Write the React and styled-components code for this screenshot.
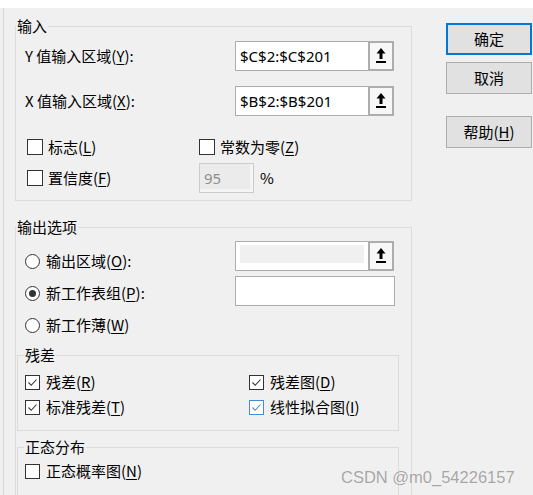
import React from 'react'
import styled, { createGlobalStyle } from 'styled-components'

const GlobalStyle = createGlobalStyle`
  body {
    margin: 0;
    background: #f0f0f0;
    font-family: "Noto Sans CJK SC", "Noto Sans", sans-serif;
    font-size: 15px;
    color: #000;
  }
  u {
    text-underline-offset: 2px;
    text-decoration-thickness: 1px;
  }
`

const Window = styled.div`
  position: relative;
  width: 533px;
  height: 495px;
  overflow: hidden;
  display: flex;
  flex-direction: column;
  background: #f0f0f0;
`

const TopStrip = styled.div`
  height: 8px;
  flex: none;
  background: #fff;
`

const Body = styled.div`
  flex: 1;
  display: flex;
  margin-left: 3px;
  padding-left: 11px;
  border-left: 1px solid #d5d5d5;
`

const Main = styled.div`
  width: 397px;
  flex: none;
  display: flex;
  flex-direction: column;
`

const Group = styled.fieldset`
  margin: ${p => p.$mt || 0}px 0 0;
  padding: 0;
  min-width: 0;
  border: 1px solid #dcdcdc;
`

const SubGroup = styled(Group)`
  margin: ${p => p.$mt || 0}px 12px 0 1px;
`

const Legend = styled.legend`
  margin-left: ${p => p.$indent || 0}px;
  padding: 0 1px;
  font-size: 15px;
  line-height: 16px;
`

const Fields = styled.div`
  padding: 7px 17px 7px 9px;
`

const FieldRow = styled.div`
  display: flex;
  align-items: center;
  justify-content: space-between;
  height: 30px;
  line-height: 18px;

  & + & {
    margin-top: 15px;
  }
`

const RangeInput = styled.div`
  display: flex;
  width: ${p => p.$width || 159}px;
  height: 30px;
`

const TextBox = styled.div`
  flex: 1;
  display: flex;
  align-items: center;
  padding: ${p => (p.$disabled ? '3px 4px 7px 4px' : '0 4px')};
  border: 1px solid #acacac;
  border-right: ${p => (p.$attached ? 'none' : '1px solid #acacac')};
  background: #fff;
  font-family: "Noto Sans", sans-serif;
  font-size: 15px;
  line-height: 18px;
`

const DisabledFill = styled.div`
  flex: 1;
  align-self: stretch;
  background: #f0f0f0;
`

const PickButton = styled.div`
  width: 26px;
  flex: none;
  display: flex;
  align-items: center;
  justify-content: center;
  box-sizing: border-box;
  border: 2px solid #adadad;
  background: #f7f7f7;
`

const Options = styled.div`
  display: grid;
  grid-template-columns: ${p => p.$col}px 1fr;
  row-gap: ${p => p.$gap}px;
  margin-top: ${p => p.$mt || 0}px;
  padding: ${p => p.$pad};
  line-height: 18px;
`

const CheckItem = styled.label`
  display: flex;
  align-items: center;
  gap: ${p => p.$gap || 5}px;
  height: ${p => p.$h || 20}px;
`

const Box = styled.span`
  width: ${p => p.$size}px;
  height: ${p => p.$size}px;
  box-sizing: border-box;
  flex: none;
  display: flex;
  align-items: center;
  justify-content: center;
  border: 1px solid ${p => (p.$focus ? '#3f8fd2' : '#333')};
  background: #fff;
`

const PercentBox = styled.div`
  width: 55px;
  height: 30px;
  box-sizing: border-box;
  display: flex;
  align-items: center;
  padding-left: 4px;
  border: 1px solid #cccccc;
  background: #ebebeb;
  box-shadow: inset -3px -3px 0 #f4f4f4;
  color: #8d8d8d;
  font-family: "Noto Sans", sans-serif;
  font-size: 15px;
`

const OutputArea = styled.div`
  display: flex;
  justify-content: space-between;
  padding: 6px 16px 0 9px;
`

const RadioColumn = styled.div`
  display: flex;
  flex-direction: column;
  margin-top: 4px;
`

const RadioItem = styled.label`
  display: flex;
  align-items: center;
  gap: 6px;
  height: 32px;
  line-height: 18px;
`

const Circle = styled.span`
  position: relative;
  width: 15px;
  height: 15px;
  box-sizing: border-box;
  flex: none;
  border: 1px solid #333;
  border-radius: 50%;
  background: #fff;

  &::after {
    content: '';
    display: ${p => (p.$checked ? 'block' : 'none')};
    position: absolute;
    left: 3px;
    top: 3px;
    width: 7px;
    height: 7px;
    border-radius: 50%;
    background: #333;
  }
`

const InputColumn = styled.div`
  display: flex;
  flex-direction: column;
  gap: 5px;
`

const Buttons = styled.div`
  width: 86px;
  flex: none;
  display: flex;
  flex-direction: column;
  margin-left: 34px;
  padding-top: 15px;
`

const Button = styled.button`
  height: 32px;
  margin-top: ${p => p.$mt || 0}px;
  padding: 0;
  box-sizing: border-box;
  border: ${p => (p.$primary ? '2px solid #0078d7' : '1px solid #adadad')};
  background: #e1e1e1;
  font-family: inherit;
  font-size: 15px;
  line-height: 18px;
  color: #000;
`

const Watermark = styled.div`
  position: absolute;
  left: 341px;
  top: 467px;
  font-family: "Liberation Sans", Arial, sans-serif;
  font-size: 16.5px;
  line-height: 20px;
  color: rgba(150, 150, 150, 0.85);
  text-shadow: 0 0 1px rgba(255, 255, 255, 0.6);
  white-space: nowrap;
`

const UpArrow = () => (
  <svg width="10" height="16" viewBox="0 0 10 16">
    <polygon points="5,0 9.5,5.5 6.5,5.5 6.5,11 3.5,11 3.5,5.5 0.5,5.5" fill="#000" />
    <rect x="0" y="13" width="10" height="2" fill="#000" />
  </svg>
)

const Check = ({ color = '#333' }) => (
  <svg width="13" height="13" viewBox="0 0 13 13">
    <polyline points="2.5,6.5 5.2,9.3 10.5,3.5" fill="none" stroke={color} strokeWidth="1.1" />
  </svg>
)

const CheckBox = ({ size = 16, checked, focus, gap, h, children }) => (
  <CheckItem $gap={gap} $h={h}>
    <Box $size={size} $focus={focus}>
      {checked && <Check color={focus ? '#3f8fd2' : '#333'} />}
    </Box>
    <span>{children}</span>
  </CheckItem>
)

const Range = ({ value, disabled }) => (
  <RangeInput>
    <TextBox $attached $disabled={disabled}>
      {disabled ? <DisabledFill /> : value}
    </TextBox>
    <PickButton>
      <UpArrow />
    </PickButton>
  </RangeInput>
)

const App = () => {
  return (
    <Window>
      <GlobalStyle />
      <TopStrip />
      <Body>
        <Main>
          <Group $mt={10}>
            <Legend>输入</Legend>
            <Fields>
              <FieldRow>
                <span>Y 值输入区域(<u>Y</u>):</span>
                <Range value="$C$2:$C$201" />
              </FieldRow>
              <FieldRow>
                <span>X 值输入区域(<u>X</u>):</span>
                <Range value="$B$2:$B$201" />
              </FieldRow>
              <Options $col={172} $gap={6} $mt={21} $pad="0 0 0 2px">
                <CheckBox>标志(<u>L</u>)</CheckBox>
                <CheckBox>常数为零(<u>Z</u>)</CheckBox>
                <CheckBox h={30}>置信度(<u>F</u>)</CheckBox>
                <CheckItem $h={30} $gap={6}>
                  <PercentBox>95</PercentBox>
                  <span>%</span>
                </CheckItem>
              </Options>
            </Fields>
          </Group>

          <Group $mt={18}>
            <Legend>输出选项</Legend>
            <OutputArea>
              <RadioColumn>
                <RadioItem>
                  <Circle />
                  <span>输出区域(<u>O</u>):</span>
                </RadioItem>
                <RadioItem>
                  <Circle $checked />
                  <span>新工作表组(<u>P</u>):</span>
                </RadioItem>
                <RadioItem>
                  <Circle />
                  <span>新工作薄(<u>W</u>)</span>
                </RadioItem>
              </RadioColumn>
              <InputColumn>
                <Range disabled />
                <RangeInput $width={160}>
                  <TextBox />
                </RangeInput>
              </InputColumn>
            </OutputArea>

            <SubGroup $mt={6}>
              <Legend $indent={6}>残差</Legend>
              <Options $col={224} $gap={5} $pad="9px 0 13px 7px">
                <CheckBox size={15} gap={6} checked>残差(<u>R</u>)</CheckBox>
                <CheckBox size={15} gap={6} checked>残差图(<u>D</u>)</CheckBox>
                <CheckBox size={15} gap={6} checked>标准残差(<u>T</u>)</CheckBox>
                <CheckBox size={15} gap={6} checked focus>线性拟合图(<u>I</u>)</CheckBox>
              </Options>
            </SubGroup>

            <SubGroup $mt={8}>
              <Legend $indent={6}>正态分布</Legend>
              <Options $col={224} $gap={5} $pad="6px 0 20px 7px">
                <CheckBox size={15} gap={6}>正态概率图(<u>N</u>)</CheckBox>
              </Options>
            </SubGroup>
          </Group>
        </Main>

        <Buttons>
          <Button $primary>确定</Button>
          <Button $mt={7}>取消</Button>
          <Button $mt={22}>帮助(<u>H</u>)</Button>
        </Buttons>
      </Body>
      <Watermark>CSDN @m0_54226157</Watermark>
    </Window>
  )
}

export default App
